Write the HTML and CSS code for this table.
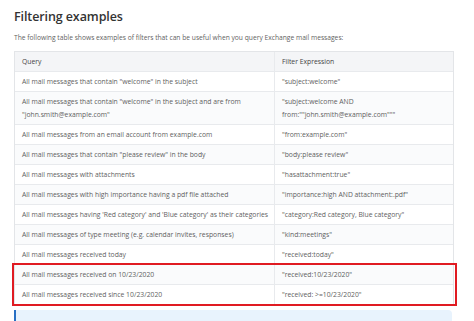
FILE: index.html
```html
<!DOCTYPE html>
<html>
<head>
<meta charset="utf-8">
<link rel="stylesheet" href="styles.css">
</head>
<body>
<main class="page">
  <h1 class="title">Filtering examples</h1>
  <p class="intro">The following table shows examples of filters that can be useful when you query Exchange mail messages:</p>
  <div class="table">
    <div class="row head"><div class="cell">Query</div><div class="cell">Filter Expression</div></div>
    <div class="row"><div class="cell">All mail messages that contain "welcome" in the subject</div><div class="cell">"subject:welcome"</div></div>
    <div class="row alt"><div class="cell">All mail messages that contain "welcome" in the subject and are from "john.smith@example.com"</div><div class="cell">"subject:welcome AND from:""john.smith@example.com"""</div></div>
    <div class="row"><div class="cell">All mail messages from an email account from example.com</div><div class="cell">"from:example.com"</div></div>
    <div class="row alt"><div class="cell">All mail messages that contain "please review" in the body</div><div class="cell">"body:please review"</div></div>
    <div class="row"><div class="cell">All mail messages with attachments</div><div class="cell">"hasattachment:true"</div></div>
    <div class="row alt"><div class="cell">All mail messages with high importance having a pdf file attached</div><div class="cell">"importance:high AND attachment:.pdf"</div></div>
    <div class="row"><div class="cell">All mail messages having 'Red category' and 'Blue category' as their categories</div><div class="cell">"category:Red category, Blue category"</div></div>
    <div class="row alt"><div class="cell">All mail messages of type meeting (e.g. calendar invites, responses)</div><div class="cell">"kind:meetings"</div></div>
    <div class="row"><div class="cell">All mail messages received today</div><div class="cell">"received:today"</div></div>
    <div class="highlight">
      <div class="row alt"><div class="cell">All mail messages received on 10/23/2020</div><div class="cell">"received:10/23/2020"</div></div>
      <div class="row last"><div class="cell">All mail messages received since 10/23/2020</div><div class="cell">"received: &gt;=10/23/2020"</div></div>
    </div>
  </div>
  <div class="note"></div>
</main>
</body>
</html>
```
FILE: styles.css
```css
html, body { margin: 0; padding: 0; background: #fff; }
.page {
  padding: 7px 22px 0 14px;
  font-family: "Open Sans", "Noto Sans", sans-serif;
  color: #5f5f5f;
}
.title {
  margin: 0;
  font-size: 12.5px;
  line-height: 20px;
  font-weight: 600;
  color: #333;
  letter-spacing: -0.1px;
}
.intro {
  margin: 6px 0 8px;
  font-size: 6.7px;
  line-height: 10px;
}
.table {
  width: 438px;
  border: 1px solid #e3e5e8;
  border-bottom: none;
  font-size: 6.8px;
  line-height: 13px;
}
.row {
  display: grid;
  grid-template-columns: 259px 1fr;
  border-bottom: 1px solid #e8eaed;
}
.row.alt { background: #fafbfc; }
.row.head { background: #f4f5f7; color: #444; }
.cell { padding: 3px 6px 3px 7px; white-space: nowrap; }
.row.alt:nth-child(3) .cell { white-space: normal; }
.cell + .cell { border-left: 1px solid #e8eaed; }
.highlight {
  outline: 2px solid #e01b22;
  outline-offset: 0;
  margin: 0 -2px 0 -1px;
  padding: 0 2px 0 1px;
}
.highlight .row.last { border-bottom: none; }
.note {
  margin-top: 6px;
  width: 436px;
  height: 20px;
  background: #e8f3fd;
  border-left: 2px solid #2870c4;
  border-radius: 0 4px 4px 0;
}
```
